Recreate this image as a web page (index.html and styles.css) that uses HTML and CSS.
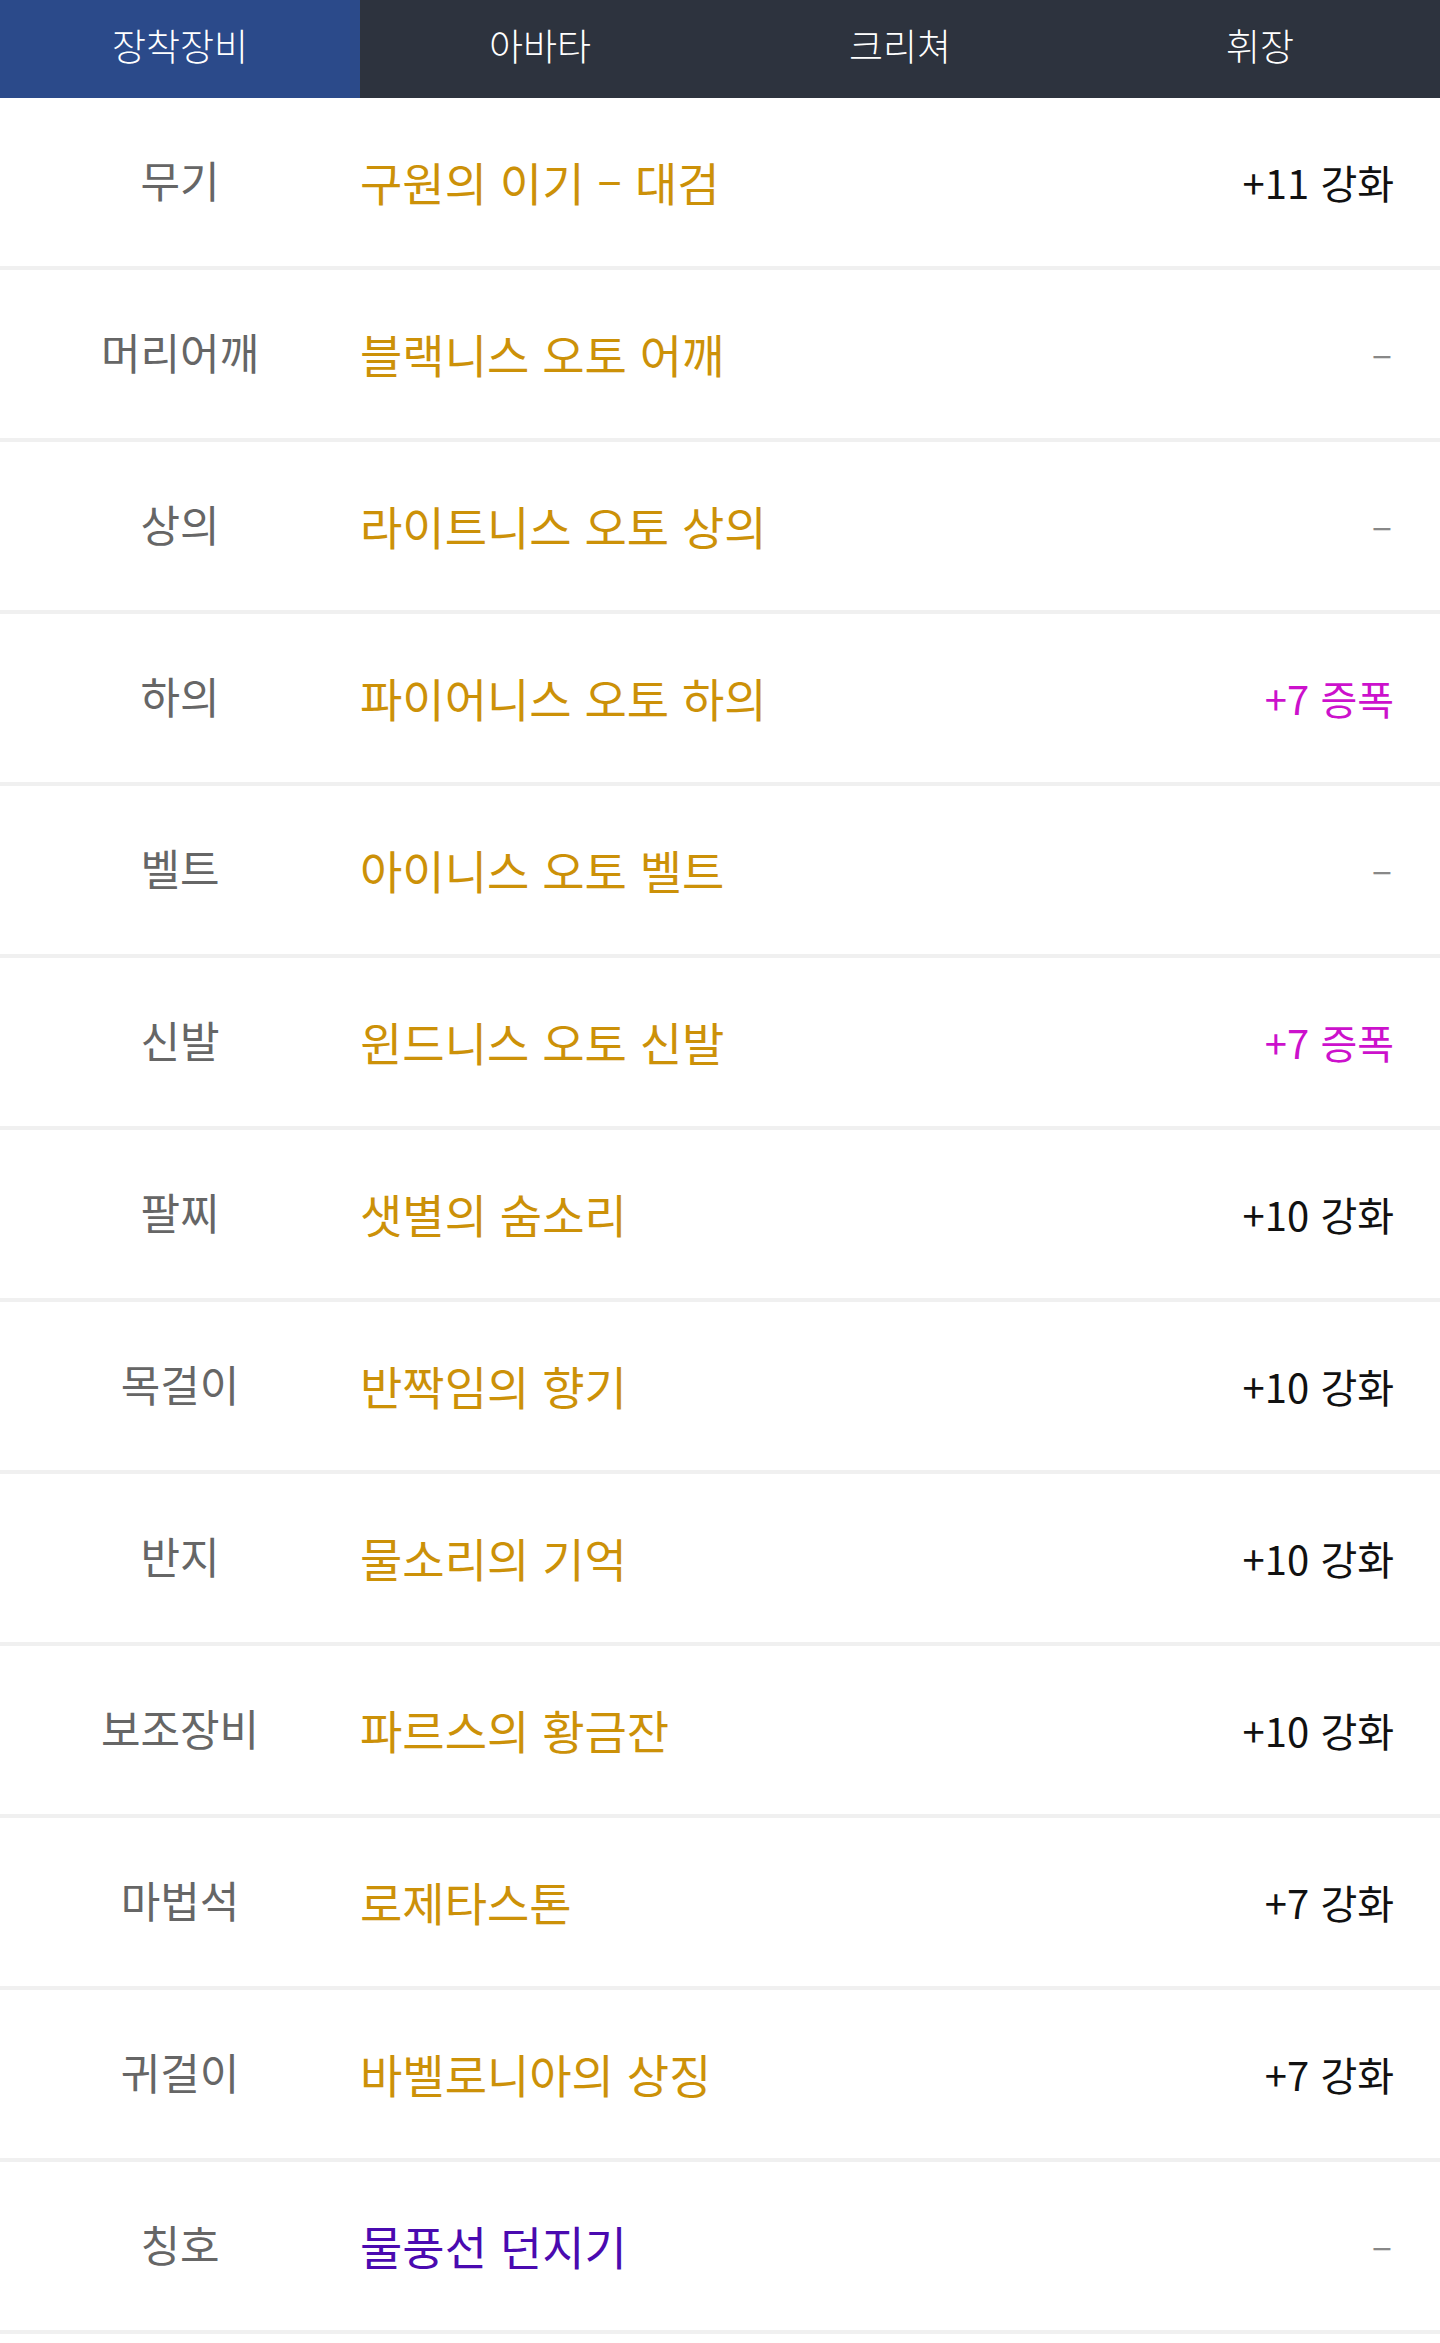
FILE: index.html
```html
<!DOCTYPE html>
<html lang="ko">
<head>
<meta charset="utf-8">
<title>장착장비</title>
<link rel="stylesheet" href="styles.css">
</head>
<body>
<nav class="tabs">
  <div class="tab active">장착장비</div>
  <div class="tab">아바타</div>
  <div class="tab">크리쳐</div>
  <div class="tab">휘장</div>
</nav>
<ul class="list">
  <li class="row"><span class="slot">무기</span><span class="name gold">구원의 이기 – 대검</span><span class="val">+11 강화</span></li>
  <li class="row"><span class="slot">머리어깨</span><span class="name gold">블랙니스 오토 어깨</span><span class="val dash">–</span></li>
  <li class="row"><span class="slot">상의</span><span class="name gold">라이트니스 오토 상의</span><span class="val dash">–</span></li>
  <li class="row"><span class="slot">하의</span><span class="name gold">파이어니스 오토 하의</span><span class="val amp">+7 증폭</span></li>
  <li class="row"><span class="slot">벨트</span><span class="name gold">아이니스 오토 벨트</span><span class="val dash">–</span></li>
  <li class="row"><span class="slot">신발</span><span class="name gold">윈드니스 오토 신발</span><span class="val amp">+7 증폭</span></li>
  <li class="row"><span class="slot">팔찌</span><span class="name gold">샛별의 숨소리</span><span class="val">+10 강화</span></li>
  <li class="row"><span class="slot">목걸이</span><span class="name gold">반짝임의 향기</span><span class="val">+10 강화</span></li>
  <li class="row"><span class="slot">반지</span><span class="name gold">물소리의 기억</span><span class="val">+10 강화</span></li>
  <li class="row"><span class="slot">보조장비</span><span class="name gold">파르스의 황금잔</span><span class="val">+10 강화</span></li>
  <li class="row"><span class="slot">마법석</span><span class="name gold">로제타스톤</span><span class="val">+7 강화</span></li>
  <li class="row"><span class="slot">귀걸이</span><span class="name gold">바벨로니아의 상징</span><span class="val">+7 강화</span></li>
  <li class="row"><span class="slot">칭호</span><span class="name purple">물풍선 던지기</span><span class="val dash">–</span></li>
</ul>
</body>
</html>
```
FILE: styles.css
```css
* { box-sizing: border-box; }
html, body {
  margin: 0;
  padding: 0;
  background: #fff;
  font-family: "Noto Sans CJK KR", "Noto Sans", sans-serif;
}
.tabs {
  display: flex;
  height: 98px;
  background: #2d333e;
}
.tab {
  flex: 1 1 0;
  display: flex;
  align-items: center;
  justify-content: center;
  color: #fff;
  font-size: 37px;
  font-weight: 300;
  padding-bottom: 8px;
}
.tab.active { background: #2b4a8a; }
.list {
  list-style: none;
  margin: 0;
  padding: 0;
}
.row {
  display: flex;
  align-items: center;
  height: 172px;
  border-bottom: 4px solid #f0f0f0;
  padding-right: 46px;
}
.slot {
  width: 360px;
  flex: none;
  text-align: center;
  color: #666;
  font-size: 43px;
  padding-bottom: 6px;
}
.name {
  flex: 1;
  font-size: 46px;
  padding-bottom: 2px;
}
.gold { color: #cc9108; }
.purple { color: #4a0ab0; }
.val {
  font-size: 40px;
  color: #111;
}
.val.amp { color: #cc11cc; }
.val.dash {
  color: #888;
  font-size: 38px;
  padding-bottom: 5px;
  margin-right: 2px;
}
```
